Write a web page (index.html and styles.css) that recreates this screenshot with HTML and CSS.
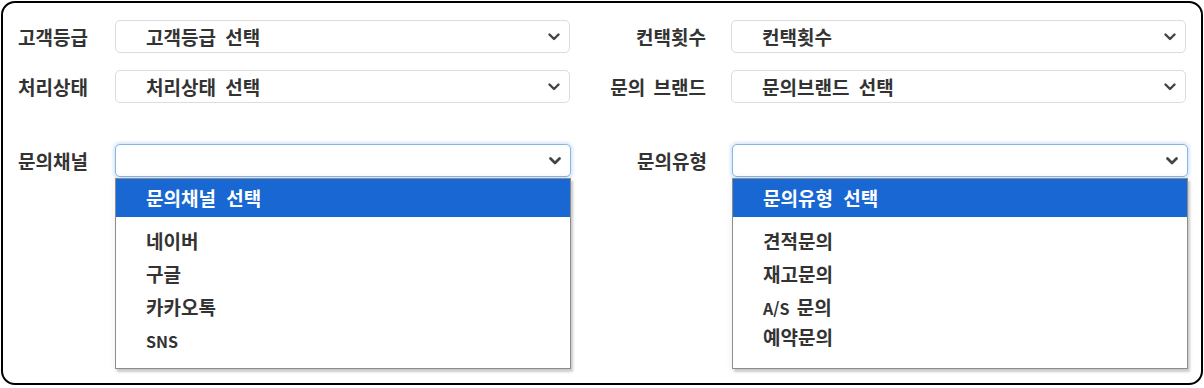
FILE: index.html
```html
<!DOCTYPE html>
<html lang="ko">
<head>
  <meta charset="UTF-8" />
  <title>문의 검색 필터</title>
  <link rel="stylesheet" href="styles.css">
</head>
<body>

<div class="panel">
  <div class="filter-row">
    <label class="lbl">고객등급</label>
    <div class="select">
      <span>고객등급 선택</span>
      <svg class="chev" width="12" height="8" viewBox="0 0 12 8"><polyline points="1.5,1.5 6,6 10.5,1.5" /></svg>
    </div>
    <label class="lbl lbl-right">컨택횟수</label>
    <div class="select">
      <span>컨택횟수</span>
      <svg class="chev" width="12" height="8" viewBox="0 0 12 8"><polyline points="1.5,1.5 6,6 10.5,1.5" /></svg>
    </div>
  </div>

  <div class="filter-row">
    <label class="lbl">처리상태</label>
    <div class="select">
      <span>처리상태 선택</span>
      <svg class="chev" width="12" height="8" viewBox="0 0 12 8"><polyline points="1.5,1.5 6,6 10.5,1.5" /></svg>
    </div>
    <label class="lbl lbl-right">문의 브랜드</label>
    <div class="select">
      <span>문의브랜드 선택</span>
      <svg class="chev" width="12" height="8" viewBox="0 0 12 8"><polyline points="1.5,1.5 6,6 10.5,1.5" /></svg>
    </div>
  </div>

  <div class="filter-row row-open">
    <label class="lbl">문의채널</label>
    <div class="combo">
      <div class="select is-open">
        <span></span>
        <svg class="chev" width="12" height="8" viewBox="0 0 12 8"><polyline points="1.5,1.5 6,6 10.5,1.5" /></svg>
      </div>
      <ul class="options">
        <li class="active">문의채널 선택</li>
        <li>네이버</li>
        <li>구글</li>
        <li>카카오톡</li>
        <li><span class="latin">SNS</span></li>
      </ul>
    </div>
    <label class="lbl lbl-right">문의유형</label>
    <div class="combo">
      <div class="select is-open">
        <span></span>
        <svg class="chev" width="12" height="8" viewBox="0 0 12 8"><polyline points="1.5,1.5 6,6 10.5,1.5" /></svg>
      </div>
      <ul class="options">
        <li class="active">문의유형 선택</li>
        <li>견적문의</li>
        <li>재고문의</li>
        <li><span class="latin">A/S</span> 문의</li>
        <li class="tight">예약문의</li>
      </ul>
    </div>
  </div>
</div>

</body>
</html>
```

FILE: styles.css
```css
html, body {
  margin: 0;
  padding: 0;
  background: #fff;
  font-family: "Noto Sans CJK KR", "Noto Sans", sans-serif;
  color: #333;
}

.panel {
  box-sizing: border-box;
  width: 1202px;
  height: 384px;
  margin: 1px;
  padding: 17px 0 0 15px;
  border: 2px solid #000;
  border-radius: 14px;
  background: #fff;
}

.filter-row {
  display: flex;
  align-items: center;
  height: 33px;
  margin-bottom: 17px;
}

.filter-row.row-open {
  margin-top: 41px;
}

.lbl {
  width: 97px;
  flex: none;
  font-size: 19px;
  font-weight: 700;
  word-spacing: 3px;
  color: #333;
  line-height: 33px;
  white-space: nowrap;
}

.lbl-right {
  box-sizing: border-box;
  width: 161px;
  padding-right: 25px;
  text-align: right;
}

.select {
  box-sizing: border-box;
  width: 455px;
  height: 33px;
  flex: none;
  display: flex;
  align-items: center;
  justify-content: space-between;
  padding: 0 9px 0 30px;
  border: 1px solid #dcdcdc;
  border-radius: 5px;
  background: #fff;
  font-size: 19px;
  font-weight: 700;
  word-spacing: 4px;
  color: #333;
}

.chev polyline {
  fill: none;
  stroke: #444;
  stroke-width: 2.4;
  stroke-linecap: round;
  stroke-linejoin: round;
}

.combo {
  position: relative;
  width: 456px;
  flex: none;
}

.select.is-open {
  width: 456px;
  border: 1px solid #86b5ea;
  box-shadow: 0 0 3px 2px rgba(150, 190, 235, 0.35);
}

.select.is-open .chev polyline {
  stroke-width: 2.7;
}

.options {
  position: absolute;
  top: 34px;
  left: 0;
  z-index: 2;
  box-sizing: border-box;
  width: 456px;
  height: 191px;
  margin: 0;
  padding: 0;
  list-style: none;
  overflow: hidden;
  border: 1px solid #8c8c8c;
  background: #fff;
  box-shadow: 2px 3px 2px rgba(0, 0, 0, 0.18), 0 0 7px rgba(0, 0, 0, 0.08);
}

.options li {
  height: 33px;
  line-height: 33px;
  padding-left: 30px;
  font-size: 19px;
  font-weight: 700;
  word-spacing: 2px;
  color: #333;
}

.options li.active {
  height: 38px;
  line-height: 37px;
  margin-bottom: 7px;
  background: #1967d2;
  color: #fff;
  word-spacing: 5px;
}

.options .latin {
  font-size: 16px;
}

.options li.tight {
  margin-top: -3px;
}
```
